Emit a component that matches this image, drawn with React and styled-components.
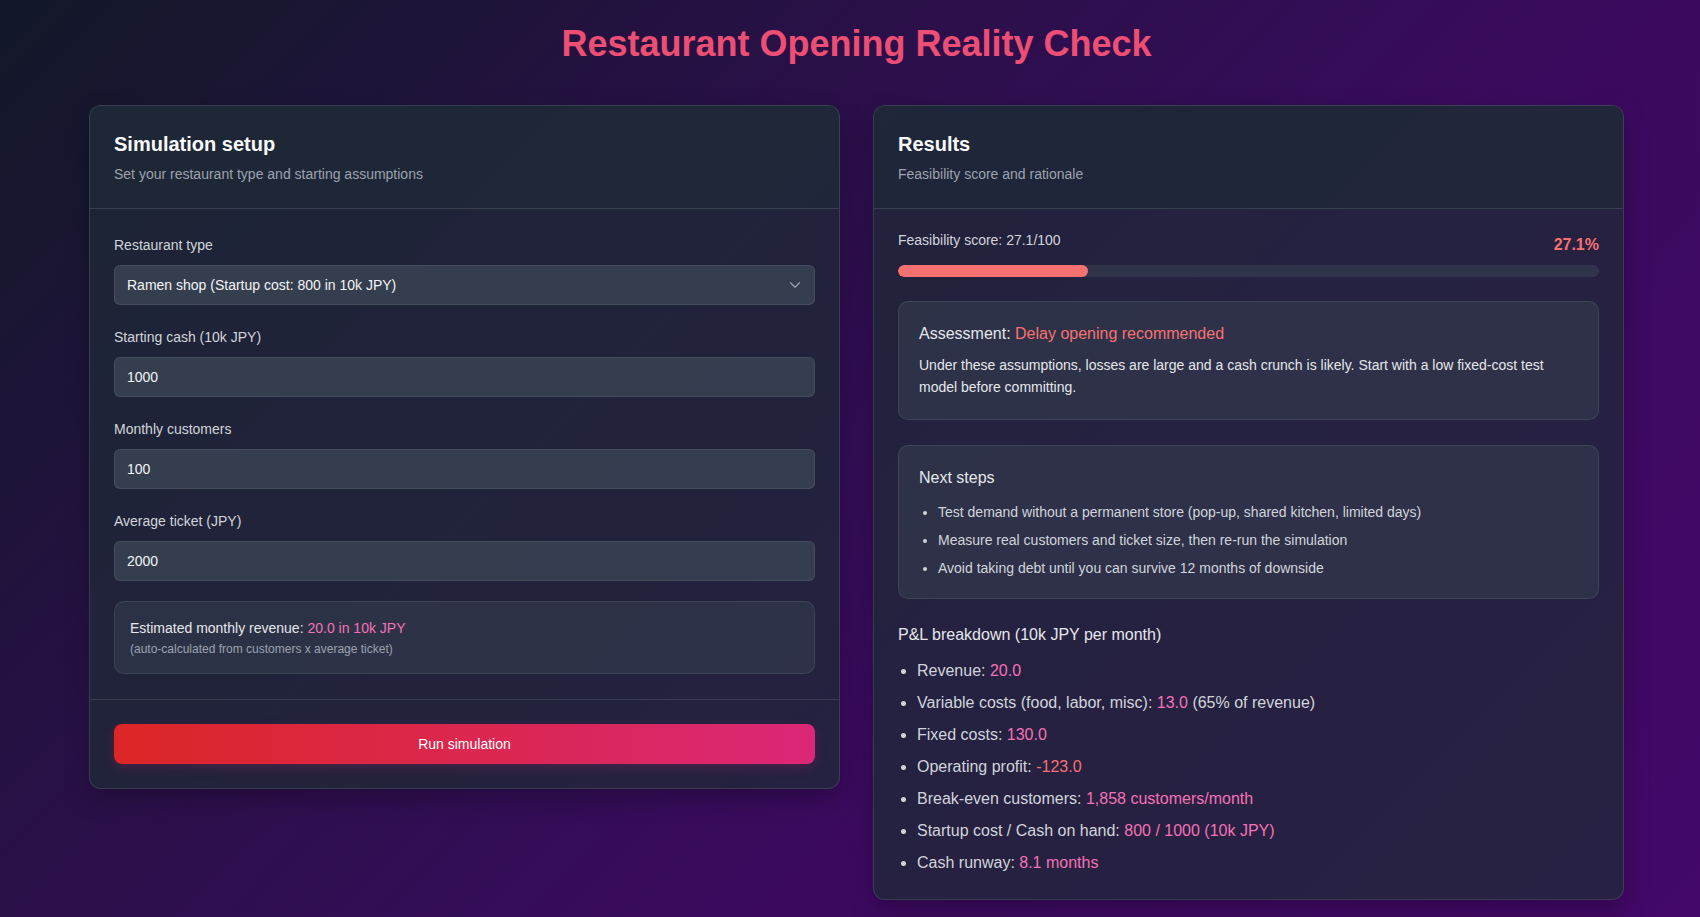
import React from "react";
import styled, { createGlobalStyle } from "styled-components";
import { ChevronDown } from "lucide-react";

const GlobalStyle = createGlobalStyle`
  html, body { margin: 0; padding: 0; }
  body {
    font-family: "Liberation Sans", Arial, Helvetica, sans-serif;
    background: #111827;
    color: #e5e7eb;
  }
  *, *::before, *::after { box-sizing: border-box; }
`;

const Page = styled.div`
  min-height: 100vh;
  padding: 24px 76px 16px 89px;
  background: linear-gradient(135deg, #111827 0%, #2a1049 35%, #3b0a60 65%, #430868 100%);
`;

const Title = styled.h1`
  margin: 0 0 41px;
  text-align: center;
  font-size: 36px;
  line-height: 40px;
  font-weight: 700;
  color: #ec4e74;
`;

const Grid = styled.div`
  display: grid;
  grid-template-columns: 1fr 1fr;
  gap: 33px;
  align-items: start;
`;

const Card = styled.section`
  background: rgba(31, 41, 55, 0.75);
  border: 1px solid rgba(75, 85, 99, 0.55);
  border-radius: 12px;
  overflow: hidden;
  box-shadow: 0 10px 25px rgba(0, 0, 0, 0.25);
`;

const CardHeader = styled.header`
  padding: 24px;
  background: rgba(31, 41, 55, 0.65);
  border-bottom: 1px solid rgba(75, 85, 99, 0.55);
`;

const CardTitle = styled.h2`
  margin: 0;
  font-size: 20px;
  line-height: 28px;
  font-weight: 700;
  color: #f9fafb;
`;

const CardSubtitle = styled.p`
  margin: 6px 0 0;
  font-size: 14px;
  line-height: 20px;
  color: #9ca3af;
`;

const CardBody = styled.div`
  padding: ${(p) => p.$pad};
`;

const CardFooter = styled.footer`
  padding: 24px;
  border-top: 1px solid rgba(75, 85, 99, 0.55);
`;

const Field = styled.div`
  margin-bottom: 22px;
`;

const Label = styled.label`
  display: block;
  font-size: 14px;
  line-height: 20px;
  color: #d1d5db;
  margin-bottom: 10px;
`;

const controlStyles = `
  display: block;
  width: 100%;
  height: 40px;
  padding: 0 12px;
  background: rgba(55, 65, 81, 0.92);
  border: 1px solid rgba(75, 85, 99, 0.7);
  border-radius: 6px;
  color: #f3f4f6;
  font-family: "Liberation Sans", Arial, Helvetica, sans-serif;
  font-size: 14px;
  outline: none;
`;

const Input = styled.input`
  ${controlStyles}
`;

const SelectWrap = styled.div`
  position: relative;
`;

const Select = styled.select`
  ${controlStyles}
  appearance: none;
  -webkit-appearance: none;
  padding-right: 36px;
  cursor: pointer;
`;

const SelectIcon = styled.span`
  position: absolute;
  right: 11px;
  top: 50%;
  transform: translateY(-50%);
  display: flex;
  color: #9ca3af;
  pointer-events: none;
`;

const InfoBox = styled.div`
  background: rgba(55, 65, 81, 0.5);
  border: 1px solid rgba(75, 85, 99, 0.55);
  border-radius: 10px;
  padding: ${(p) => p.$pad || "20px"};
  margin-top: ${(p) => p.$mt || "0px"};
`;

const RevenueLine = styled.div`
  font-size: 14px;
  line-height: 20px;
  color: #e5e7eb;
`;

const SmallNote = styled.div`
  margin-top: 3px;
  font-size: 12px;
  line-height: 16px;
  color: #9ca3af;
`;

const Value = styled.span`
  color: ${(p) => (p.$tone === "red" ? "#f87171" : "#f472b6")};
`;

const RunButton = styled.button`
  display: block;
  width: 100%;
  height: 40px;
  border: none;
  border-radius: 8px;
  background: linear-gradient(90deg, #dc2626 0%, #db2777 100%);
  color: #ffffff;
  font-family: "Liberation Sans", Arial, Helvetica, sans-serif;
  font-size: 14px;
  font-weight: 500;
  cursor: pointer;
  box-shadow: 0 4px 12px rgba(219, 39, 119, 0.2);
`;

const ScoreRow = styled.div`
  display: flex;
  justify-content: space-between;
  align-items: flex-start;
`;

const ScoreLabel = styled.span`
  font-size: 14px;
  line-height: 20px;
  color: #d1d5db;
`;

const ScorePct = styled.span`
  font-size: 16px;
  line-height: 29px;
  font-weight: 700;
  color: #f87171;
`;

const Track = styled.div`
  margin-top: 6px;
  height: 12px;
  border-radius: 999px;
  background: rgba(55, 65, 81, 0.6);
  overflow: hidden;
`;

const Fill = styled.div`
  height: 100%;
  border-radius: 999px;
  background: #f87171;
`;

const BoxHeading = styled.h3`
  margin: 0 0 ${(p) => p.$mb || "8px"};
  font-size: 16px;
  line-height: 24px;
  font-weight: 400;
  color: #e5e7eb;
`;

const Paragraph = styled.p`
  margin: 0;
  font-size: 14px;
  line-height: 22.4px;
  color: #e5e7eb;
`;

const StepList = styled.ul`
  margin: 0;
  padding-left: 19px;
  li {
    font-size: 14px;
    line-height: 20px;
    color: #d1d5db;
    margin-bottom: 8px;
  }
  li:last-child { margin-bottom: 0; }
`;

const SectionHeading = styled.h3`
  margin: 24px 0 12px;
  font-size: 16px;
  line-height: 24px;
  font-weight: 400;
  color: #e5e7eb;
`;

const PLList = styled.ul`
  margin: 0;
  padding-left: 19px;
  li {
    font-size: 16px;
    line-height: 24px;
    color: #d1d5db;
    margin-bottom: 8px;
  }
  li:last-child { margin-bottom: 0; }
`;

const score = 27.1;

const steps = [
  "Test demand without a permanent store (pop-up, shared kitchen, limited days)",
  "Measure real customers and ticket size, then re-run the simulation",
  "Avoid taking debt until you can survive 12 months of downside",
];

export default function App() {
  return (
    <>
      <GlobalStyle />
      <Page>
        <Title>Restaurant Opening Reality Check</Title>
        <Grid>
          <Card>
            <CardHeader>
              <CardTitle>Simulation setup</CardTitle>
              <CardSubtitle>Set your restaurant type and starting assumptions</CardSubtitle>
            </CardHeader>
            <CardBody $pad="26px 24px 25px">
              <Field>
                <Label>Restaurant type</Label>
                <SelectWrap>
                  <Select defaultValue="ramen">
                    <option value="ramen">Ramen shop (Startup cost: 800 in 10k JPY)</option>
                    <option value="cafe">Cafe</option>
                    <option value="izakaya">Izakaya</option>
                  </Select>
                  <SelectIcon>
                    <ChevronDown size={18} strokeWidth={1.5} />
                  </SelectIcon>
                </SelectWrap>
              </Field>
              <Field>
                <Label>Starting cash (10k JPY)</Label>
                <Input defaultValue="1000" />
              </Field>
              <Field>
                <Label>Monthly customers</Label>
                <Input defaultValue="100" />
              </Field>
              <Field>
                <Label>Average ticket (JPY)</Label>
                <Input defaultValue="2000" />
              </Field>
              <InfoBox $pad="16px 15px" $mt="-2px">
                <RevenueLine>
                  Estimated monthly revenue: <Value>20.0 in 10k JPY</Value>
                </RevenueLine>
                <SmallNote>(auto-calculated from customers x average ticket)</SmallNote>
              </InfoBox>
            </CardBody>
            <CardFooter>
              <RunButton>Run simulation</RunButton>
            </CardFooter>
          </Card>

          <Card>
            <CardHeader>
              <CardTitle>Results</CardTitle>
              <CardSubtitle>Feasibility score and rationale</CardSubtitle>
            </CardHeader>
            <CardBody $pad="21px 24px 24px">
              <ScoreRow>
                <ScoreLabel>Feasibility score: 27.1/100</ScoreLabel>
                <ScorePct>27.1%</ScorePct>
              </ScoreRow>
              <Track>
                <Fill style={{ width: `${score}%` }} />
              </Track>

              <InfoBox $mt="24px">
                <BoxHeading>
                  Assessment: <Value $tone="red">Delay opening recommended</Value>
                </BoxHeading>
                <Paragraph>
                  Under these assumptions, losses are large and a cash crunch is likely. Start with a low
                  fixed-cost test model before committing.
                </Paragraph>
              </InfoBox>

              <InfoBox $mt="25px">
                <BoxHeading $mb="12px">Next steps</BoxHeading>
                <StepList>
                  {steps.map((s) => (
                    <li key={s}>{s}</li>
                  ))}
                </StepList>
              </InfoBox>

              <SectionHeading>P&amp;L breakdown (10k JPY per month)</SectionHeading>
              <PLList>
                <li>
                  Revenue: <Value>20.0</Value>
                </li>
                <li>
                  Variable costs (food, labor, misc): <Value>13.0</Value> (65% of revenue)
                </li>
                <li>
                  Fixed costs: <Value>130.0</Value>
                </li>
                <li>
                  Operating profit: <Value $tone="red">-123.0</Value>
                </li>
                <li>
                  Break-even customers: <Value>1,858 customers/month</Value>
                </li>
                <li>
                  Startup cost / Cash on hand: <Value>800 / 1000 (10k JPY)</Value>
                </li>
                <li>
                  Cash runway: <Value>8.1 months</Value>
                </li>
              </PLList>
            </CardBody>
          </Card>
        </Grid>
      </Page>
    </>
  );
}
